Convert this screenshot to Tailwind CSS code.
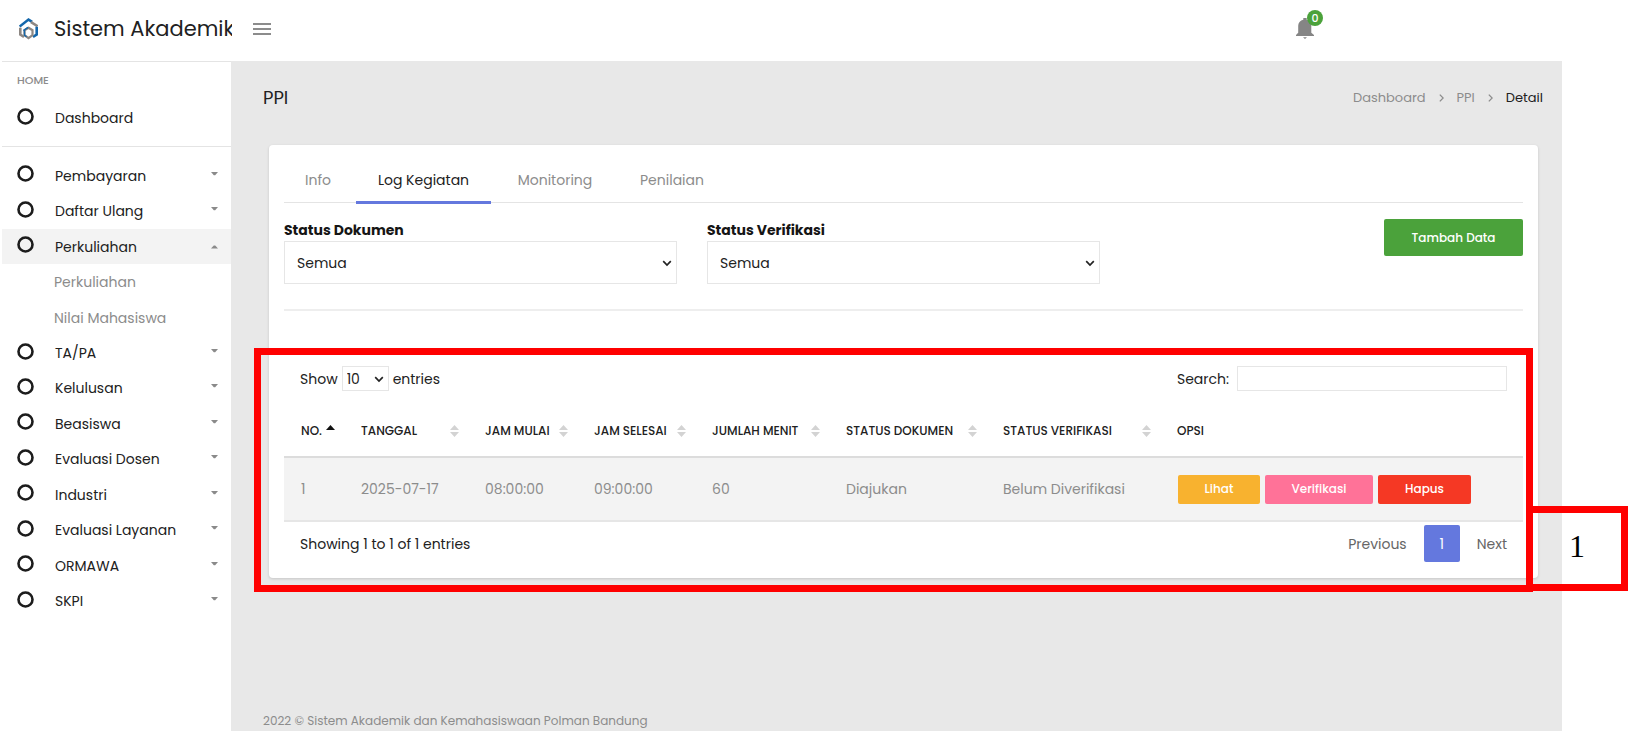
<!DOCTYPE html>
<html lang="id">
<head>
<meta charset="utf-8">
<meta name="viewport" content="width=device-width, initial-scale=1">
<title>Sistem Akademik - PPI</title>
<script src="https://cdn.jsdelivr.net/npm/@tailwindcss/browser@4"></script>
</head>
<body class="bg-white font-['Poppins','Inter',sans-serif] text-[14px] leading-5 text-[#212121]">
<svg class="hidden" aria-hidden="true">
  <symbol id="ring" viewBox="0 0 17 17"><circle cx="8.5" cy="8.5" r="7" fill="none" stroke="#1c1c1c" stroke-width="2.6"/></symbol>
  <symbol id="down" viewBox="0 0 7 4"><path d="M0 0h7L4.2 3.2H2.8z" fill="#8a8a8a"/></symbol>
  <symbol id="up" viewBox="0 0 7 4"><path d="M0 3.6h7L4.2 .4H2.8z" fill="#8a8a8a"/></symbol>
  <symbol id="sort" viewBox="0 0 9 12"><path d="M0 5L4.5 0 9 5zM0 7h9l-4.500 5z" fill="#d3d3d3"/></symbol>
  <symbol id="chev" viewBox="0 0 10 7"><path d="M1.200 1.200L5 5l3.800-3.800" fill="none" stroke="#222" stroke-width="1.700"/></symbol>
  <symbol id="crumb" viewBox="0 0 5 8"><path d="M.8.6L4.200 4 .8 7.400" fill="none" stroke="#8c8c8c" stroke-width="1.300"/></symbol>
</svg>
<div class="flex min-h-screen flex-col pr-[83px] pb-[25px] pl-[2px]">
  <header class="flex h-[61px] items-center">
    <a href="#" class="flex w-[230px] shrink-0 items-center gap-4 overflow-hidden pb-1 pl-[17px]">
      <svg class="h-[22px] w-[19px] shrink-0" viewBox="0 0 19 22" fill="none" stroke-width="2.600" aria-hidden="true">
        <path d="M.6 8.600L9.500 1.600l3.600 2.200" stroke="#1467ab"/>
        <path d="M12 4.200l6.500 4" stroke="#8d8783"/>
        <path d="M1.300 9.800v6.700L5 19" stroke="#8d8783"/>
        <path d="M17.700 8.800v7.700L14 18.800" stroke="#1467ab"/>
        <path d="M9.500 9.800l4 2.400v5l-4 3-4-3v-5z" stroke="#8d8783" stroke-width="2.200"/>
        <path d="M4.400 12.600l4.600-3.200M5.500 12v5.200l2 1.600" stroke="#1467ab" stroke-width="1.400"/>
      </svg>
      <span class="text-[21px] leading-7 whitespace-nowrap">Sistem Akademik</span>
    </a>
    <button type="button" aria-label="Menu" class="ml-[21px] pb-1">
      <svg class="h-3 w-[18px]" viewBox="0 0 18 12"><path d="M0 1h18M0 6h18M0 11h18" stroke="#8c8c8c" stroke-width="2"/></svg>
    </button>
    <button type="button" aria-label="Notifikasi" class="relative mr-[248px] mb-1 ml-auto">
      <svg class="h-[21px] w-[18px]" viewBox="0 0 18 21"><path d="M7.300 0h3.400v1.700c3 .7 4.600 3 4.600 6v7L18 17v1H0v-1l2.200-2.300v-7c0-3 1.800-5.300 5.100-6zM7 19.300h4l-2 1.700z" fill="#858585"/></svg>
      <span class="absolute -top-2 left-[11px] size-4 rounded-full bg-[#4ba23b] text-[11px] leading-4 font-medium text-white">0</span>
    </button>
  </header>
  <div class="flex flex-1">
    <nav class="w-[229px] shrink-0 border-t border-[#e4e4e4]">
      <p class="pt-2 pl-[15px] text-[11px] font-medium text-[#8c8c8c]">HOME</p>
      <a href="#" class="mt-[10px] flex h-9 items-center gap-[21px] pl-[15px]"><svg class="mb-1 size-[17px]"><use href="#ring"/></svg>Dashboard</a>
      <hr class="mt-[10px] border-[#e4e4e4]">
      <ul class="mt-[11px] grid h-[461px] auto-rows-fr">
        <li><a href="#" class="flex h-full items-center gap-[21px] pr-[13px] pl-[15px]"><svg class="mb-1 size-[17px]"><use href="#ring"/></svg>Pembayaran<svg class="mb-1 ml-auto h-1 w-[7px]"><use href="#down"/></svg></a></li>
        <li><a href="#" class="flex h-full items-center gap-[21px] pr-[13px] pl-[15px]"><svg class="mb-1 size-[17px]"><use href="#ring"/></svg>Daftar Ulang<svg class="mb-1 ml-auto h-1 w-[7px]"><use href="#down"/></svg></a></li>
        <li class="bg-[#f3f3f3]"><a href="#" class="flex h-full items-center gap-[21px] pr-[13px] pl-[15px]"><svg class="mb-1 size-[17px]"><use href="#ring"/></svg>Perkuliahan<svg class="ml-auto h-1 w-[7px]"><use href="#up"/></svg></a></li>
        <li><a href="#" class="flex h-full items-center pl-[52px] text-[#8c8c8c]">Perkuliahan</a></li>
        <li><a href="#" class="flex h-full items-center pl-[52px] text-[#8c8c8c]">Nilai Mahasiswa</a></li>
        <li><a href="#" class="flex h-full items-center gap-[21px] pr-[13px] pl-[15px]"><svg class="mb-1 size-[17px]"><use href="#ring"/></svg>TA/PA<svg class="mb-1 ml-auto h-1 w-[7px]"><use href="#down"/></svg></a></li>
        <li><a href="#" class="flex h-full items-center gap-[21px] pr-[13px] pl-[15px]"><svg class="mb-1 size-[17px]"><use href="#ring"/></svg>Kelulusan<svg class="mb-1 ml-auto h-1 w-[7px]"><use href="#down"/></svg></a></li>
        <li><a href="#" class="flex h-full items-center gap-[21px] pr-[13px] pl-[15px]"><svg class="mb-1 size-[17px]"><use href="#ring"/></svg>Beasiswa<svg class="mb-1 ml-auto h-1 w-[7px]"><use href="#down"/></svg></a></li>
        <li><a href="#" class="flex h-full items-center gap-[21px] pr-[13px] pl-[15px]"><svg class="mb-1 size-[17px]"><use href="#ring"/></svg>Evaluasi Dosen<svg class="mb-1 ml-auto h-1 w-[7px]"><use href="#down"/></svg></a></li>
        <li><a href="#" class="flex h-full items-center gap-[21px] pr-[13px] pl-[15px]"><svg class="mb-1 size-[17px]"><use href="#ring"/></svg>Industri<svg class="mb-1 ml-auto h-1 w-[7px]"><use href="#down"/></svg></a></li>
        <li><a href="#" class="flex h-full items-center gap-[21px] pr-[13px] pl-[15px]"><svg class="mb-1 size-[17px]"><use href="#ring"/></svg>Evaluasi Layanan<svg class="mb-1 ml-auto h-1 w-[7px]"><use href="#down"/></svg></a></li>
        <li><a href="#" class="flex h-full items-center gap-[21px] pr-[13px] pl-[15px]"><svg class="mb-1 size-[17px]"><use href="#ring"/></svg>ORMAWA<svg class="mb-1 ml-auto h-1 w-[7px]"><use href="#down"/></svg></a></li>
        <li><a href="#" class="flex h-full items-center gap-[21px] pr-[13px] pl-[15px]"><svg class="mb-1 size-[17px]"><use href="#ring"/></svg>SKPI<svg class="mb-1 ml-auto h-1 w-[7px]"><use href="#down"/></svg></a></li>
      </ul>
    </nav>
    <div class="flex min-w-0 flex-1 flex-col bg-[#e8e8e8]">
      <div class="flex h-[84px] items-center justify-between pr-[19px] pb-[10px] pl-8">
        <h1 class="text-[18px]">PPI</h1>
        <nav aria-label="Breadcrumb" class="flex items-center gap-[13px] text-[13px] text-[#8c8c8c]">
          <a href="#">Dashboard</a><svg class="h-2 w-[5px]"><use href="#crumb"/></svg>
          <a href="#">PPI</a><svg class="h-2 w-[5px]"><use href="#crumb"/></svg>
          <span class="text-[#212121]">Detail</span>
        </nav>
      </div>
      <main class="mr-6 ml-[38px] rounded-[4px] bg-white px-[15px] pb-4 shadow-[0_1px_3px_rgba(0,0,0,0.15)]">
        <div role="tablist" class="flex gap-1 border-b border-[#e4e4e4] pt-3 text-[#8c8c8c]">
          <button type="button" role="tab" class="h-[45px] w-[68px]">Info</button>
          <button type="button" role="tab" aria-selected="true" class="-mb-[2px] h-[47px] w-[135px] border-b-3 border-[#6478de] pt-px text-[#212121]">Log Kegiatan</button>
          <button type="button" role="tab" class="h-[45px] w-[120px]">Monitoring</button>
          <button type="button" role="tab" class="h-[45px] w-[106px]">Penilaian</button>
        </div>
        <div class="grid grid-cols-3 gap-[30px] pt-4">
          <div class="pt-px">
            <label for="dok" class="block font-bold text-[#151515]">Status Dokumen</label>
            <div class="relative mt-px">
              <select id="dok" class="h-[43px] w-full appearance-none border border-[#e6e6e6] bg-white pl-3"><option>Semua</option></select>
              <svg class="pointer-events-none absolute top-[19px] right-[5px] h-[7px] w-[10px]"><use href="#chev"/></svg>
            </div>
          </div>
          <div class="pt-px">
            <label for="ver" class="block font-bold text-[#151515]">Status Verifikasi</label>
            <div class="relative mt-px">
              <select id="ver" class="h-[43px] w-full appearance-none border border-[#e6e6e6] bg-white pl-3"><option>Semua</option></select>
              <svg class="pointer-events-none absolute top-[19px] right-[5px] h-[7px] w-[10px]"><use href="#chev"/></svg>
            </div>
          </div>
          <div class="text-right"><button type="button" class="h-[37px] w-[139px] rounded-[2px] bg-[#4ba23b] text-[12px] font-medium text-white">Tambah Data</button></div>
        </div>
        <hr class="mt-[25px] border-t-2 border-[#eeeeee]">
        <section class="relative mt-[55px]">
          <div class="flex h-[25px] items-center justify-between px-4">
            <div class="flex items-center gap-1">
              <label for="len">Show</label>
              <span class="relative">
                <select id="len" class="h-[25px] w-[47px] appearance-none border border-[#e6e6e6] bg-white pl-1"><option>10</option></select>
                <svg class="pointer-events-none absolute top-[10px] right-[5px] h-[7px] w-[10px]"><use href="#chev"/></svg>
              </span>
              <span>entries</span>
            </div>
            <div class="flex items-center gap-2">
              <label for="q">Search:</label>
              <input id="q" type="search" class="h-[25px] w-[270px] border border-[#e6e6e6] px-2">
            </div>
          </div>
          <table class="mt-[15px] w-full table-fixed border-collapse text-left">
            <colgroup><col class="w-[60px]"><col class="w-[124px]"><col class="w-[109px]"><col class="w-[118px]"><col class="w-[134px]"><col class="w-[157px]"><col class="w-[174px]"><col></colgroup>
            <thead>
              <tr class="h-[51px] border-b-2 border-[#dcdcdc] text-[12px] whitespace-nowrap">
                <th class="pr-[9px] pl-[17px] font-medium"><div class="flex items-center justify-between">NO.<svg class="mb-[7px] h-[5px] w-[9px]" viewBox="0 0 9 5"><path d="M0 5L4.500 0 9 5z" fill="#111"/></svg></div></th>
                <th class="pr-[9px] pl-[17px] font-medium"><div class="flex items-center justify-between">TANGGAL<svg class="h-3 w-[9px]"><use href="#sort"/></svg></div></th>
                <th class="pr-[9px] pl-[17px] font-medium"><div class="flex items-center justify-between">JAM MULAI<svg class="h-3 w-[9px]"><use href="#sort"/></svg></div></th>
                <th class="pr-[9px] pl-[17px] font-medium"><div class="flex items-center justify-between">JAM SELESAI<svg class="h-3 w-[9px]"><use href="#sort"/></svg></div></th>
                <th class="pr-[9px] pl-[17px] font-medium"><div class="flex items-center justify-between">JUMLAH MENIT<svg class="h-3 w-[9px]"><use href="#sort"/></svg></div></th>
                <th class="pr-[9px] pl-[17px] font-medium"><div class="flex items-center justify-between">STATUS DOKUMEN<svg class="h-3 w-[9px]"><use href="#sort"/></svg></div></th>
                <th class="pr-[9px] pl-[17px] font-medium"><div class="flex items-center justify-between">STATUS VERIFIKASI<svg class="h-3 w-[9px]"><use href="#sort"/></svg></div></th>
                <th class="pl-[17px] font-medium">OPSI</th>
              </tr>
            </thead>
            <tbody>
              <tr class="h-16 border-b-2 border-[#e6e6e6] bg-[#f3f3f3] whitespace-nowrap text-[#8c8c8c]">
                <td class="pl-[17px]">1</td>
                <td class="pl-[17px]">2025-07-17</td>
                <td class="pl-[17px]">08:00:00</td>
                <td class="pl-[17px]">09:00:00</td>
                <td class="pl-[17px]">60</td>
                <td class="pl-[17px]">Diajukan</td>
                <td class="pl-[17px]">Belum Diverifikasi</td>
                <td class="pl-[18px]"><div class="flex gap-[5px] text-[12px] font-medium text-white">
                  <button type="button" class="h-[29px] w-[82px] rounded-[2px] bg-[#f8b22f]">Lihat</button>
                  <button type="button" class="h-[29px] w-[108px] rounded-[2px] bg-[#ff7298]">Verifikasi</button>
                  <button type="button" class="h-[29px] w-[93px] rounded-[2px] bg-[#f53824]">Hapus</button>
                </div></td>
              </tr>
            </tbody>
          </table>
          <div class="mt-[3px] flex items-center justify-between px-4">
            <p>Showing 1 to 1 of 1 entries</p>
            <div class="flex items-center gap-[17px] text-[#666]">
              <button type="button">Previous</button>
              <button type="button" class="h-[37px] w-9 rounded-[2px] bg-[#6478de] text-white">1</button>
              <button type="button">Next</button>
            </div>
          </div>
          <!-- Callout frame round the log table, with its number -->
          <div class="pointer-events-none absolute -top-[18px] -right-[10px] -bottom-[30px] -left-[30px] border-[7px] border-[#ff0000]">
            <div class="absolute -right-[102px] -bottom-[6px] flex h-[85px] w-[102px] items-center justify-center border-[7px] border-[#ff0000] pb-[6px] font-['Liberation_Serif',serif] text-[32px] text-black">1</div>
          </div>
        </section>
      </main>
      <footer class="mt-auto pl-8 text-[12px] text-[#8c8c8c]">2022 © Sistem Akademik dan Kemahasiswaan Polman Bandung</footer>
    </div>
  </div>
</div>
</body>
</html>
